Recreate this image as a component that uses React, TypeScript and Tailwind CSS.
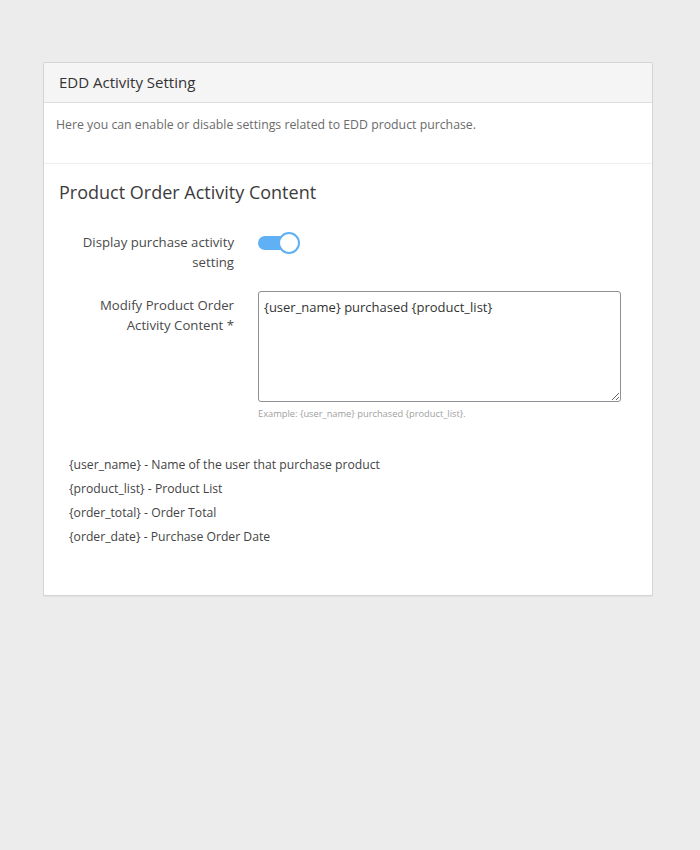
import React from "react";

export default function App() {
  return (
    <div
      className="min-h-[850px] w-full bg-[#ececec] pt-[62px] px-[43px]"
      style={{ fontFamily: '"Open Sans", "Noto Sans", sans-serif' }}
    >
      <div className="w-[610px] bg-white border border-[#d5d5d5] rounded-[2px] shadow-[0_1px_1px_rgba(0,0,0,0.05)]">
        <div className="h-[40px] bg-[#f5f5f5] border-b border-[#dddddd] flex items-center px-[15px] text-[15px] text-[#333333]">
          EDD Activity Setting
        </div>
        <div className="px-[12px] pt-[13px] pb-[29px] text-[12.3px] text-[#6b6b6b] border-b border-[#eeeeee]">
          Here you can enable or disable settings related to EDD product purchase.
        </div>
        <div className="px-[15px] pt-[15px] pb-[46px]">
          <h2 className="text-[18px] text-[#3c3c3c] leading-[26px]">Product Order Activity Content</h2>
          <div className="mt-[27px] flex">
            <div className="w-[175px] text-right text-[13.2px] leading-[20px] text-[#4a4a4a]">
              Display purchase activity setting
            </div>
            <div className="ml-[24px]">
              <div className="relative w-[42px] h-[22px]">
                <div className="absolute left-0 top-[4px] w-[32px] h-[14px] rounded-full bg-[#5fb0f5]" />
                <div className="absolute left-[20px] top-0 w-[22px] h-[22px] rounded-full bg-white border-[2px] border-[#5fb0f5]" />
              </div>
            </div>
          </div>
          <div className="mt-[19px] flex">
            <div className="w-[175px] pt-[4px] text-right text-[13.2px] leading-[20px] text-[#4a4a4a]">
              Modify Product Order Activity Content *
            </div>
            <div className="ml-[24px] w-[363px]">
              <textarea
                className="block w-[363px] h-[111px] border border-[#8c8f94] rounded-[3px] px-[5px] py-[6px] text-[13px] leading-[18px] text-[#333333] outline-none resize-y"
                style={{ fontFamily: '"Open Sans", "Noto Sans", sans-serif' }}
                defaultValue="{user_name} purchased {product_list}"
              />
              <div className="mt-[5px] text-[9.3px] text-[#a0a0a0]">
                Example: {"{user_name}"} purchased {"{product_list}"}.
              </div>
            </div>
          </div>
          <div className="mt-[32px] pl-[10px] text-[12.2px] text-[#444444] leading-[24px]">
            <div>{"{user_name}"} - Name of the user that purchase product</div>
            <div>{"{product_list}"} - Product List</div>
            <div>{"{order_total}"} - Order Total</div>
            <div>{"{order_date}"} - Purchase Order Date</div>
          </div>
        </div>
      </div>
    </div>
  );
}
